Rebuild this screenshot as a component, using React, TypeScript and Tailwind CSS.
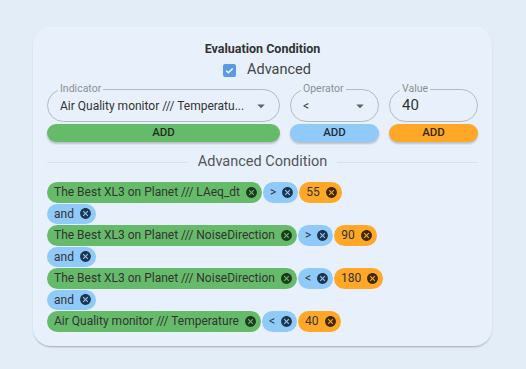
import React from "react";

const CancelIcon = ({ className = "" }: { className?: string }) => (
  <svg viewBox="0 0 24 24" className={"w-[13px] h-[13px] shrink-0 " + className} fill="currentColor">
    <path d="M12 2C6.47 2 2 6.47 2 12s4.47 10 10 10 10-4.47 10-10S17.53 2 12 2zm5 13.59L15.59 17 12 13.41 8.41 17 7 15.59 10.59 12 7 8.41 8.41 7 12 10.59 15.59 7 17 8.41 13.41 12 17 15.59z" />
  </svg>
);

const ArrowDrop = () => (
  <svg viewBox="0 0 24 24" className="w-[18px] h-[18px] text-[#5f6368]" fill="currentColor">
    <path d="M7 10l5 5 5-5z" />
  </svg>
);

type Color = "green" | "blue" | "orange";
const chipBg: Record<Color, string> = {
  green: "bg-[#66bb6a]",
  blue: "bg-[#90caf9]",
  orange: "bg-[#ffa726]",
};
const iconColor: Record<Color, string> = {
  green: "text-[#1d3a1f]",
  blue: "text-[#1e3550]",
  orange: "text-[#3d2a0c]",
};

const Chip = ({ label, color }: { label: string; color: Color }) => (
  <span
    className={
      "inline-flex items-center h-[20.5px] rounded-full pl-[7px] pr-[4px] gap-[5px] text-[12px] leading-none text-[#333] " +
      chipBg[color]
    }
  >
    <span>{label}</span>
    <CancelIcon className={iconColor[color]} />
  </span>
);

const Outlined = ({
  label,
  width,
  children,
}: {
  label: string;
  width: string;
  children: React.ReactNode;
}) => (
  <div className={"relative h-[33px] rounded-full border border-[#b3b9c0] flex items-center pl-[12px] pr-[9px] " + width}>
    <span className="absolute left-[10px] top-[-7px] px-[2px] bg-[#e8f1fb] text-[10.5px] leading-[12px] text-[#8a8f95]">
      {label}
    </span>
    {children}
  </div>
);

export default function App() {
  const rows: React.ReactNode[] = [
    <div key="r1" className="flex gap-[1px]">
      <Chip label="The Best XL3 on Planet /// LAeq_dt" color="green" />
      <Chip label=">" color="blue" />
      <Chip label="55" color="orange" />
    </div>,
    <div key="a1" className="flex">
      <Chip label="and" color="blue" />
    </div>,
    <div key="r2" className="flex gap-[1px]">
      <Chip label="The Best XL3 on Planet /// NoiseDirection" color="green" />
      <Chip label=">" color="blue" />
      <Chip label="90" color="orange" />
    </div>,
    <div key="a2" className="flex">
      <Chip label="and" color="blue" />
    </div>,
    <div key="r3" className="flex gap-[1px]">
      <Chip label="The Best XL3 on Planet /// NoiseDirection" color="green" />
      <Chip label="<" color="blue" />
      <Chip label="180" color="orange" />
    </div>,
    <div key="a3" className="flex">
      <Chip label="and" color="blue" />
    </div>,
    <div key="r4" className="flex gap-[1px]">
      <Chip label="Air Quality monitor /// Temperature" color="green" />
      <Chip label="<" color="blue" />
      <Chip label="40" color="orange" />
    </div>,
  ];

  return (
    <div
      className="w-[526px] h-[369px] bg-[#e3edf8] pt-[27px] pl-[33px]"
      style={{ fontFamily: "Roboto, 'Liberation Sans', sans-serif" }}
    >
      <div className="w-[459px] rounded-[18px] bg-[#e8f1fb] px-[14px] pt-[13px] pb-[14px] shadow-[0_2px_2px_-1px_rgba(0,0,0,0.22),0_1px_2px_0_rgba(0,0,0,0.08)] border-t border-[#edf4fc]">
        <div className="text-center text-[12.5px] leading-[16px] font-bold text-[#333]">Evaluation Condition</div>
        <div className="mt-[3px] h-[20px] flex items-center justify-center gap-[11px] pl-[9px]">
          <span className="w-[13px] h-[13px] rounded-[2px] bg-[#5a9be6] flex items-center justify-center">
            <svg viewBox="0 0 24 24" className="w-[11px] h-[11px]" fill="none" stroke="white" strokeWidth="3">
              <path d="M5 12.5l4.5 4.5L19 7.5" />
            </svg>
          </span>
          <span className="text-[14.5px] text-[#444] leading-none">Advanced</span>
        </div>

        <div className="mt-[9px] flex gap-[10px]">
          <div className="flex flex-col gap-[2px]">
            <Outlined label="Indicator" width="w-[233px]">
              <span className="flex-1 text-[12px] text-[#333] whitespace-nowrap">Air Quality monitor /// Temperatu...</span>
              <ArrowDrop />
            </Outlined>
            <button className="h-[18px] w-[233px] rounded-full bg-[#66bb6a] text-[11.5px] font-medium text-[#23301f] shadow-[0_2px_2px_rgba(0,0,0,0.2)]">
              ADD
            </button>
          </div>
          <div className="flex flex-col gap-[2px]">
            <Outlined label="Operator" width="w-[89px]">
              <span className="flex-1 text-[12px] text-[#333]">&lt;</span>
              <ArrowDrop />
            </Outlined>
            <button className="h-[18px] w-[89px] rounded-full bg-[#90caf9] text-[11.5px] font-medium text-[#232e3c] shadow-[0_2px_2px_rgba(0,0,0,0.2)]">
              ADD
            </button>
          </div>
          <div className="flex flex-col gap-[2px]">
            <Outlined label="Value" width="w-[89px]">
              <span className="flex-1 text-[15px] text-[#333]">40</span>
            </Outlined>
            <button className="h-[18px] w-[89px] rounded-full bg-[#ffa726] text-[11.5px] font-medium text-[#35290f] shadow-[0_2px_2px_rgba(0,0,0,0.2)]">
              ADD
            </button>
          </div>
        </div>

        <div className="mt-[10px] h-[20px] flex items-center gap-[10px]">
          <div className="flex-1 border-t border-[#d4e3f3]" />
          <span className="text-[14.5px] text-[#555] leading-none">Advanced Condition</span>
          <div className="flex-1 border-t border-[#d4e3f3]" />
        </div>

        <div className="mt-[10px] flex flex-col gap-[1px]">{rows}</div>
      </div>
    </div>
  );
}
